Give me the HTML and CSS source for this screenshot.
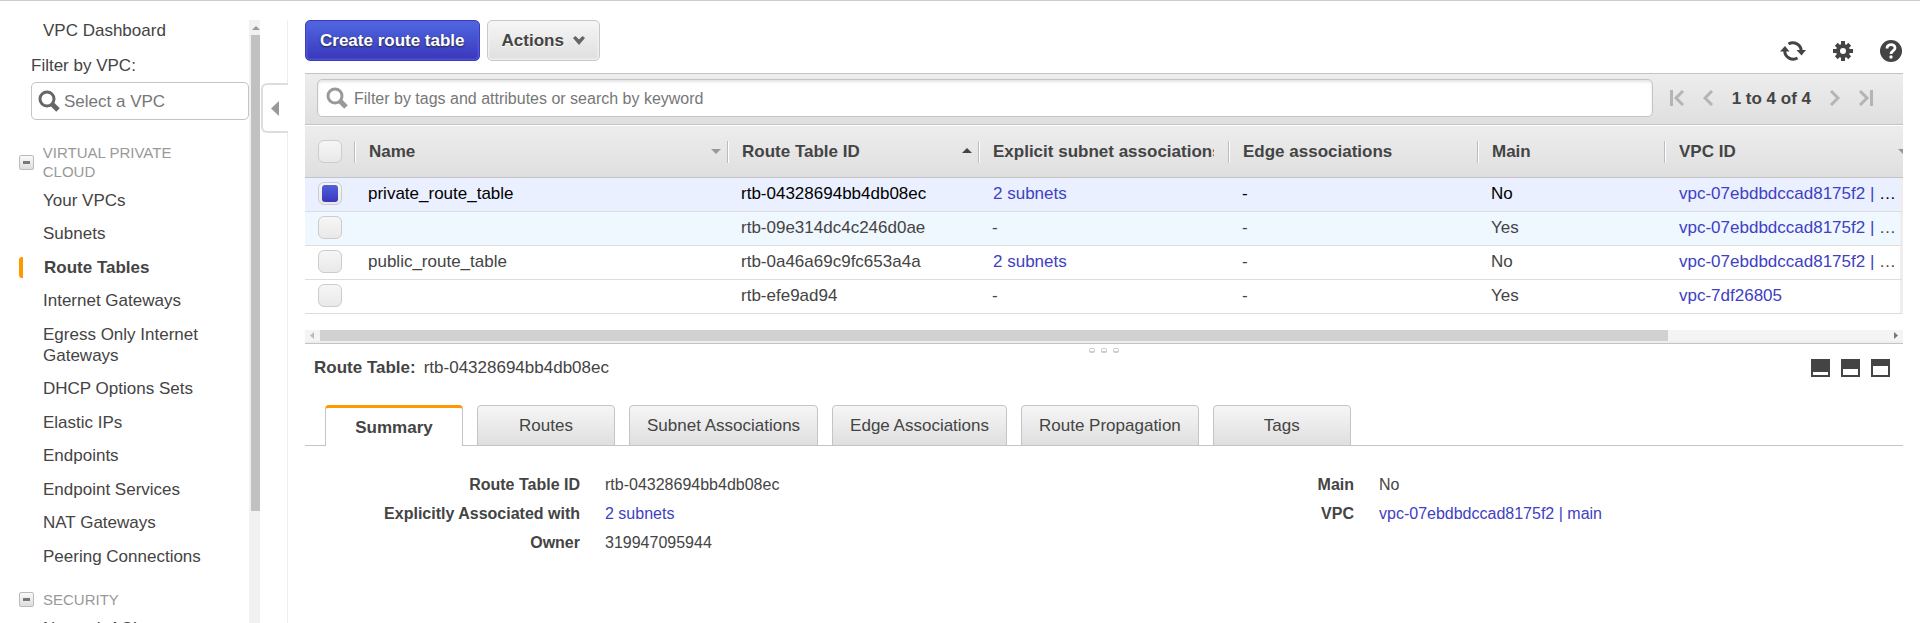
FILE: index.html
```html
<!DOCTYPE html>
<html lang="en">
<head>
<meta charset="utf-8">
<title>Route Tables | VPC</title>
<link rel="stylesheet" href="styles.css">
</head>
<body>
<div class="app">
  <nav class="sidebar" aria-label="VPC">
    <div class="nav">
      <a class="nav-link" href="#dashboard">VPC Dashboard</a>
      <label class="vpc-label" for="vpc-filter">Filter by VPC:</label>
      <div class="search vpc-search">
        <svg class="search-icon dark" viewBox="0 0 22 22" aria-hidden="true"><circle cx="9" cy="9" r="7"/><path d="M14 14l6 6"/></svg>
        <input id="vpc-filter" type="text" placeholder="Select a VPC">
      </div>
      <div class="nav-heading"><button class="toggle" aria-label="Collapse Virtual Private Cloud"></button><h2>VIRTUAL PRIVATE CLOUD</h2></div>
      <ul class="nav-list">
        <li><a class="nav-link" href="#vpcs">Your VPCs</a></li>
        <li><a class="nav-link" href="#subnets">Subnets</a></li>
        <li><a class="nav-link current" href="#route-tables">Route Tables</a></li>
        <li><a class="nav-link" href="#igw">Internet Gateways</a></li>
        <li><a class="nav-link" href="#eigw">Egress Only Internet Gateways</a></li>
        <li><a class="nav-link" href="#dhcp">DHCP Options Sets</a></li>
        <li><a class="nav-link" href="#eips">Elastic IPs</a></li>
        <li><a class="nav-link" href="#endpoints">Endpoints</a></li>
        <li><a class="nav-link" href="#services">Endpoint Services</a></li>
        <li><a class="nav-link" href="#nat">NAT Gateways</a></li>
        <li><a class="nav-link" href="#peering">Peering Connections</a></li>
      </ul>
      <div class="nav-heading"><button class="toggle" aria-label="Collapse Security"></button><h2>SECURITY</h2></div>
      <ul class="nav-list">
        <li><a class="nav-link" href="#acls">Network ACLs</a></li>
      </ul>
    </div>
    <div class="vbar"><svg viewBox="0 0 11 15" aria-hidden="true"><path d="M3 10l4-4 4 4z"/></svg><div class="vthumb"></div></div>
  </nav>

  <div class="gutter">
    <div class="rule"></div>
    <button class="collapse" aria-label="Hide navigation"><svg viewBox="0 0 8 15" aria-hidden="true"><path d="M0 7.500l8-7.500v15z"/></svg></button>
    <div class="rule"></div>
  </div>

  <main class="main">
    <div class="toolbar">
      <button class="btn primary">Create route table</button>
      <button class="btn">Actions
        <svg class="chev" viewBox="0 0 12 9" aria-hidden="true"><path d="M0 2L2.500 0 6 3.500 9.500 0 12 2 6 9z"/></svg>
      </button>
      <div class="tools">
        <button class="tool" aria-label="Refresh"><svg width="26" height="22" viewBox="0 0 26 22"><path d="M8.500 4A8.500 8.500 0 0 1 21.300 11M17.500 18A8.500 8.500 0 0 1 4.700 11" fill="none" stroke="#444" stroke-width="3"/><path d="M16.500 10H26l-4.500 5.500zM0 11.500h9.500L5 6z" fill="#444"/></svg></button>
        <button class="tool" aria-label="Settings"><svg width="20" height="20" viewBox="0 0 20 20"><g fill="#444"><circle cx="10" cy="10" r="7"/><path d="M8 0h4v20H8zM0 8h20v4H0z"/><path d="M8 0.500h4v19H8zM0.500 8h19v4h-19z" transform="rotate(45 10 10)"/></g><circle cx="10" cy="10" r="3" fill="#fff"/></svg></button>
        <button class="tool" aria-label="Help"><svg width="22" height="22" viewBox="0 0 22 22"><circle cx="11" cy="11" r="11" fill="#444"/><path d="M7 8.500C7 3.500 15 3.500 15 8c0 3-4 2.800-4 6" fill="none" stroke="#fff" stroke-width="2.800"/><circle cx="11" cy="17" r="1.700" fill="#fff"/></svg></button>
      </div>
    </div>

    <div class="filterbar">
      <div class="search table-search">
        <svg class="search-icon" viewBox="0 0 22 22" aria-hidden="true"><circle cx="9" cy="9" r="7"/><path d="M14 14l6 6"/></svg>
        <input type="text" aria-label="Filter route tables" placeholder="Filter by tags and attributes or search by keyword">
      </div>
      <div class="pager">
        <button aria-label="First page"><svg width="14" height="16" viewBox="0 0 14 16"><path d="M1.500 0v16M13 1L6 8l7 7"/></svg></button>
        <button aria-label="Previous page"><svg width="10" height="16" viewBox="0 0 10 16"><path d="M9 1L2 8l7 7"/></svg></button>
        <span class="range">1 to 4 of 4</span>
        <button aria-label="Next page"><svg width="10" height="16" viewBox="0 0 10 16"><path d="M1 1l7 7-7 7"/></svg></button>
        <button aria-label="Last page"><svg width="14" height="16" viewBox="0 0 14 16"><path d="M12.500 0v16M1 1l7 7-7 7"/></svg></button>
      </div>
    </div>

    <div class="grid-wrap">
      <table class="grid">
        <colgroup><col class="c-check"><col class="c-name"><col class="c-id"><col class="c-sub"><col class="c-edge"><col class="c-main"><col></colgroup>
        <thead>
          <tr>
            <th><input class="check" type="checkbox" aria-label="Select all"></th>
            <th><div class="head"><span>Name</span><i class="sort"></i></div></th>
            <th><div class="head"><span>Route Table ID</span><i class="sort up"></i></div></th>
            <th><div class="head clip"><span>Explicit subnet associations</span></div></th>
            <th><div class="head"><span>Edge associations</span></div></th>
            <th><div class="head"><span>Main</span></div></th>
            <th><div class="head wide"><span>VPC ID</span><i class="sort"></i></div></th>
          </tr>
        </thead>
        <tbody>
          <tr class="selected"><td><input class="check" type="checkbox" checked aria-label="Select private_route_table"></td><td>private_route_table</td><td>rtb-04328694bb4db08ec</td><td><a href="#s">2 subnets</a></td><td>-</td><td>No</td><td><a href="#v">vpc-07ebdbdccad8175f2 | main</a></td></tr>
          <tr class="hover"><td><input class="check" type="checkbox" aria-label="Select rtb-09e314dc4c246d0ae"></td><td></td><td>rtb-09e314dc4c246d0ae</td><td>-</td><td>-</td><td>Yes</td><td><a href="#v">vpc-07ebdbdccad8175f2 | main</a></td></tr>
          <tr><td><input class="check" type="checkbox" aria-label="Select public_route_table"></td><td>public_route_table</td><td>rtb-0a46a69c9fc653a4a</td><td><a href="#s">2 subnets</a></td><td>-</td><td>No</td><td><a href="#v">vpc-07ebdbdccad8175f2 | main</a></td></tr>
          <tr><td><input class="check" type="checkbox" aria-label="Select rtb-efe9ad94"></td><td></td><td>rtb-efe9ad94</td><td>-</td><td>-</td><td>Yes</td><td><a href="#v">vpc-7df26805</a></td></tr>
        </tbody>
      </table>
      <div class="hbar">
        <svg class="left" viewBox="0 0 4 7" aria-hidden="true"><path d="M4 0v7L0 3.500z"/></svg>
        <div class="htrack"><div class="hthumb"></div></div>
        <svg class="right" viewBox="0 0 4 7" aria-hidden="true"><path d="M0 0v7l4-3.500z"/></svg>
      </div>
    </div>

    <div class="splitter"><i></i><i></i><i></i></div>

    <section class="detail">
      <header class="detail-head">
        <h1><b>Route Table:</b><span>rtb-04328694bb4db08ec</span></h1>
        <div class="panes">
          <button class="pane small" aria-label="Small panel"><i></i></button>
          <button class="pane medium" aria-label="Medium panel"><i></i></button>
          <button class="pane large" aria-label="Large panel"><i></i></button>
        </div>
      </header>
      <div class="tabs" role="tablist">
        <button class="tab active" role="tab" aria-selected="true">Summary</button>
        <button class="tab" role="tab">Routes</button>
        <button class="tab" role="tab">Subnet Associations</button>
        <button class="tab" role="tab">Edge Associations</button>
        <button class="tab" role="tab">Route Propagation</button>
        <button class="tab" role="tab">Tags</button>
      </div>
      <div class="summary">
        <dl>
          <dt>Route Table ID</dt><dd>rtb-04328694bb4db08ec</dd>
          <dt>Explicitly Associated with</dt><dd><a href="#s">2 subnets</a></dd>
          <dt>Owner</dt><dd>319947095944</dd>
        </dl>
        <dl>
          <dt>Main</dt><dd>No</dd>
          <dt>VPC</dt><dd><a href="#v">vpc-07ebdbdccad8175f2 | main</a></dd>
        </dl>
      </div>
    </section>
  </main>
</div>
</body>
</html>
```
FILE: styles.css
```css
* { box-sizing: border-box; }
body {
  margin: 0;
  font: 17px/21px "Liberation Sans", Arial, sans-serif;
  color: #444;
  background: #fff;
}
h1, h2, ul, dl, dd { margin: 0; padding: 0; font-weight: normal; }
ul { list-style: none; }
a { color: #4040c4; text-decoration: none; }
button, input { font: inherit; color: inherit; }
button { padding: 0; border: 0; background: none; }
svg { display: block; flex: none; }

.app {
  display: flex;
  height: 100vh;
  overflow: hidden;
  padding-top: 19px;
  border-top: 1px solid #ccc;
}

/* Navigation */
.sidebar { display: flex; flex: none; width: 260px; }
.nav { flex: 1; min-width: 0; overflow: hidden; }
.nav-link { display: block; padding: 0 24px 0 43px; color: #444; }
.nav-link.current {
  padding-left: 21px;
  margin-left: 19px;
  border-left: 4px solid #f90;
  border-radius: 3px 0 0 3px;
  font-weight: bold;
}
.vpc-label { display: block; margin: 14px 0 6px 31px; }
.search {
  display: flex;
  align-items: center;
  height: 38px;
  padding-left: 6px;
  gap: 4px;
  border: 1px solid #c4c4c4;
  border-radius: 5px;
  background: #fff;
}
.search input { flex: 1; min-width: 0; padding: 0; border: 0; outline: 0; background: none; }
.search input::placeholder { color: #777; opacity: 1; }
.search-icon { width: 22px; height: 22px; fill: none; stroke: #999; stroke-width: 3; }
.search-icon path { stroke-width: 5; }
.search-icon.dark { stroke: #666; }
.vpc-search { margin-left: 31px; }
.nav-heading { display: flex; align-items: center; gap: 9px; padding: 0 24px 0 19px; margin: 23px 0 9px; }
.nav-heading h2 { font-size: 15px; line-height: 19px; color: #999; }
.toggle {
  display: grid;
  place-items: center;
  width: 15px;
  height: 15px;
  border: 1px solid #bbb;
  border-radius: 2px;
  background: linear-gradient(#fafafa, #ddd);
}
.toggle::before { content: ""; width: 7px; height: 3px; background: #777; }
.nav-list li { margin-bottom: 12px; }
.nav-list li:nth-child(even) { margin-bottom: 13px; }
.vbar { display: flex; flex-direction: column; flex: none; width: 11px; background: #f1f1f1; }
.vbar svg { width: 11px; height: 15px; fill: #999; }
.vthumb { height: 79%; margin-left: 2px; background: #c1c1c1; }

.gutter { display: flex; flex-direction: column; flex: none; width: 28px; }
.rule { flex: 1; border-right: 1px solid #eee; }
.rule:first-child { flex: 0 0 63px; }
.collapse {
  display: grid;
  place-items: center;
  height: 50px;
  margin-left: 1px;
  padding-right: 2px;
  border: 2px solid #ddd;
  border-right: 0;
  border-radius: 6px 0 0 6px;
}
.collapse svg { width: 8px; height: 15px; fill: #999; }

/* List */
.main { flex: 1; min-width: 0; margin: 0 17px; }
.toolbar { display: flex; gap: 7px; height: 53px; }
.btn {
  display: flex;
  align-items: center;
  gap: 9px;
  height: 41px;
  padding: 0 14px;
  border: 1px solid #c8c8c8;
  border-radius: 5px;
  background: linear-gradient(#f6f6f6, #dfdfdf);
  box-shadow: inset 0 0 2px 1px #f4f4f4;
  font-weight: bold;
  text-shadow: 0 1px #fff;
}
.primary {
  border-color: #3b3bc0;
  background: linear-gradient(#4f68e0, #3a36bd);
  box-shadow: inset 0 0 2px 1px #5560d8;
  color: #fff;
  text-shadow: 0 1px 2px #223;
}
.chev { width: 12px; height: 9px; fill: #666; }
.tools { display: flex; align-items: center; gap: 27px; height: 22px; margin: 20px 1px 0 auto; }

.filterbar {
  display: flex;
  align-items: center;
  height: 52px;
  padding: 0 30px 2px 12px;
  margin-bottom: 1px;
  border: 1px solid #c4c4c4;
  border-width: 1px 0;
  background: linear-gradient(#ededed, #dfdfdf);
}
.table-search { flex: 1; min-width: 0; padding-left: 8px; gap: 6px; font-size: 16px; box-shadow: inset 0 2px 3px #e4e4e4; }
.pager { display: flex; align-items: center; gap: 19px; margin-left: 17px; }
.pager svg { fill: none; stroke: #b4b4b4; stroke-width: 3; }
.range { font-weight: bold; white-space: nowrap; }

.grid-wrap { overflow: hidden; border-bottom: 1px solid #c4c4c4; }
.grid { width: 100%; table-layout: fixed; border-collapse: separate; border-spacing: 0; }
.c-check { width: 49px; }
.c-name { width: 373px; }
.c-id { width: 251px; }
.c-sub { width: 250px; }
.c-edge { width: 249px; }
.c-main { width: 187px; }
.grid th {
  height: 52px;
  padding: 0;
  border-bottom: 1px solid #c4c4c4;
  background: linear-gradient(#ededed, #dfdfdf);
  text-align: left;
}
.head {
  display: flex;
  align-items: center;
  height: 22px;
  padding: 0 6px 0 14px;
  border-left: 1px solid #bbb;
  box-shadow: inset 1px 0 #fff;
}
.head span { flex: 1; overflow: hidden; white-space: nowrap; }
.head.clip { padding-right: 14px; }
.head.wide { min-width: 250px; }
.sort { border: 5px solid transparent; border-top-color: #999; border-bottom: 0; }
.sort.up { border: 5px solid transparent; border-bottom-color: #444; border-top: 0; margin-bottom: 3px; }
.grid td {
  height: 34px;
  padding: 0 2px 2px 14px;
  border-bottom: 1px solid #ddd;
  overflow: hidden;
  text-overflow: ellipsis;
  white-space: nowrap;
}
.grid td:last-child { border-right: 3px solid #eee; }
.grid td a { padding-left: 1px; }
.grid th:first-child { padding-left: 13px; }
.grid td:first-child { padding-left: 13px; }
.selected td { background: #eaf0ff; color: #000; }
.hover td { background: #eff7ff; }
.check {
  appearance: none;
  display: grid;
  place-items: center;
  width: 24px;
  height: 23px;
  margin: 0;
  border: 1px solid #ccc;
  border-radius: 6px;
  background: linear-gradient(#f6f6f6, #e9e9e9);
}
.check:checked::before {
  content: "";
  width: 16px;
  height: 17px;
  border-radius: 3px;
  background: linear-gradient(#4f62dc, #3a36bd);
}
.hbar {
  display: flex;
  align-items: center;
  height: 13px;
  margin-top: 16px;
  padding: 0 5px;
  gap: 6px;
  border-bottom: 2px solid #eee;
  background: #f4f4f4;
}
.hbar svg { width: 4px; height: 7px; }
.left { fill: #bbb; }
.right { fill: #777; }
.htrack { flex: 1; height: 11px; }
.hthumb { width: 86%; height: 11px; background: #d1d1d1; }

/* Details */
.splitter { display: flex; justify-content: center; gap: 6px; padding-top: 4px; }
.splitter i { width: 6px; height: 5px; border: 1px solid #ccc; border-bottom-width: 2px; border-radius: 2px; }
.detail-head { display: flex; align-items: center; justify-content: space-between; padding: 4px 13px 0 9px; }
.detail-head h1 { display: flex; gap: 8px; font-size: 17px; line-height: 21px; }
.panes { display: flex; gap: 11px; }
.pane { display: flex; align-items: flex-end; width: 19px; height: 18px; padding: 2px; background: #444; }
.pane i { flex: 1; background: #fff; }
.small i { height: 3px; }
.medium i { height: 6px; }
.large i { height: 9px; }
.tabs { display: flex; gap: 14px; padding-left: 20px; margin-top: 27px; box-shadow: inset 0 -1px #c4c4c4; }
.tab {
  min-width: 138px;
  height: 41px;
  padding: 0 17px;
  border: 1px solid #c4c4c4;
  border-radius: 4px 4px 0 0;
  background: linear-gradient(#f6f6f6, #dfdfdf);
}
.tab.active { border-top: 3px solid #f90; border-bottom: 0; background: #fff; font-weight: bold; }
.summary {
  display: grid;
  grid-template-columns: 1fr 1fr;
  align-items: start;
  padding: 24px 50px 0 0;
  font-size: 16px;
  line-height: 29px;
}
.summary dl { display: grid; grid-template-columns: 275px 1fr; column-gap: 25px; }
.summary dt { font-weight: bold; text-align: right; }
```
